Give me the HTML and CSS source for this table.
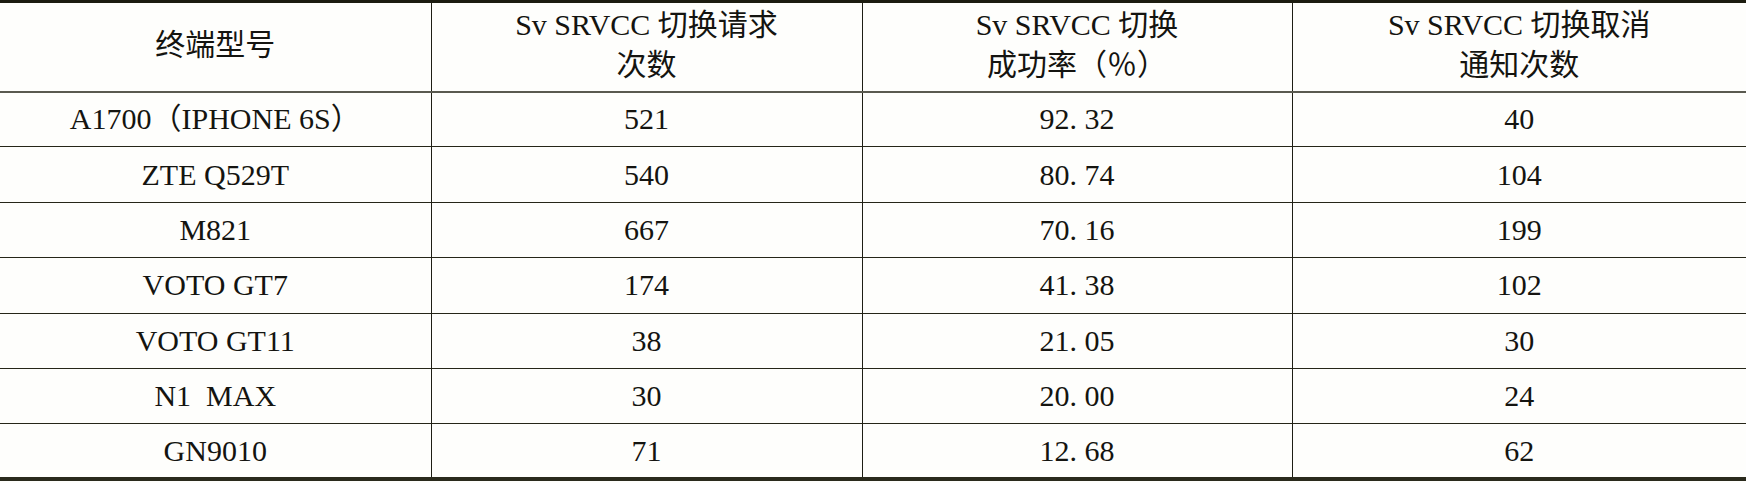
FILE: index.html
```html
<!DOCTYPE html>
<html lang="zh-CN">
<head>
  <meta charset="UTF-8" />
  <meta name="viewport" content="width=device-width, initial-scale=1" />
  <title>终端 SRVCC 切换统计</title>
  <link rel="stylesheet" href="styles.css">
</head>
<body>

  <!-- SRVCC stats per terminal model -->
  <table class="stats-table">
    <colgroup>
      <col class="col-model" />
      <col class="col-req" />
      <col class="col-rate" />
      <col class="col-cancel" />
    </colgroup>
    <thead>
      <tr>
        <th>终端型号</th>
        <th>Sv SRVCC 切换请求<br />次数</th>
        <th>Sv SRVCC 切换<br />成功率（％）</th>
        <th>Sv SRVCC 切换取消<br />通知次数</th>
      </tr>
    </thead>
    <tbody>
      <tr><td>A1700（IPHONE 6S）</td><td>521</td><td>92. 32</td><td>40</td></tr>
      <tr><td>ZTE Q529T</td><td>540</td><td>80. 74</td><td>104</td></tr>
      <tr><td>M821</td><td>667</td><td>70. 16</td><td>199</td></tr>
      <tr><td>VOTO GT7</td><td>174</td><td>41. 38</td><td>102</td></tr>
      <tr><td>VOTO GT11</td><td>38</td><td>21. 05</td><td>30</td></tr>
      <tr><td>N1&ensp;MAX</td><td>30</td><td>20. 00</td><td>24</td></tr>
      <tr><td>GN9010</td><td>71</td><td>12. 68</td><td>62</td></tr>
    </tbody>
  </table>

</body>
</html>
```

FILE: styles.css
```css
* { margin: 0; padding: 0; box-sizing: border-box; }

body {
  background: #fefefc;
  font-family: 'Liberation Serif', 'Times New Roman', 'Noto Sans CJK SC', serif;
  color: #141410;
}

.stats-table {
  width: 1746px;
  table-layout: fixed;
  border-collapse: collapse;
  border-top: 3px solid #1c1c10;
  border-bottom: 4px solid #2a2a1c;
}

.col-model { width: 431px; }
.col-req { width: 431px; }
.col-rate { width: 430px; }
.col-cancel { width: 454px; }

.stats-table th,
.stats-table td {
  border-left: 1px solid #1e1e14;
  border-right: 1px solid #1e1e14;
  text-align: center;
  vertical-align: middle;
  font-size: 30px;
  font-weight: normal;
}

.stats-table th:first-child,
.stats-table td:first-child { border-left: none; }

.stats-table th:last-child,
.stats-table td:last-child { border-right: none; }

.stats-table th {
  height: 90px;
  line-height: 40px;
  padding-bottom: 4px;
  border-bottom: 2px solid #5a5a50;
}

.stats-table td {
  height: 55.4px;
  line-height: 34px;
  border-top: 1px solid #262618;
}

.stats-table tbody tr:first-child td { border-top: none; }
```
